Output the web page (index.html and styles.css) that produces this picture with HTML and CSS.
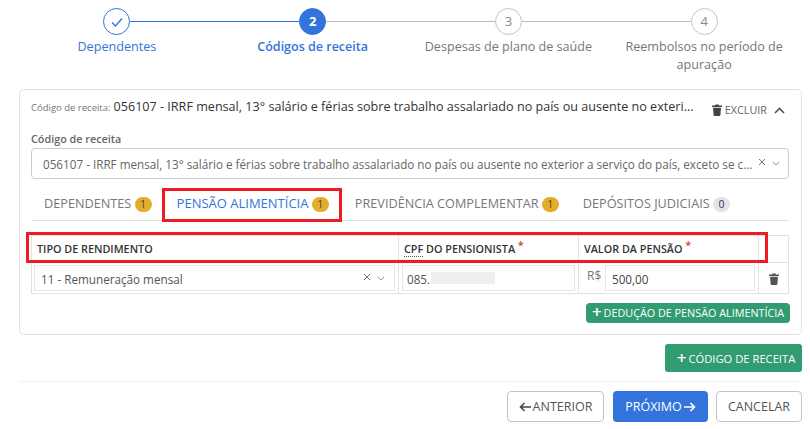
FILE: index.html
```html
<!DOCTYPE html>
<html>
<head>
    <title>Pensão alimentícia</title>
    <meta charset="utf-8">
    <link rel="stylesheet" href="styles.css">
</head>
<body>
    <div class="page">
        <div class="stepper">
            <div class="step done line-after-blue">
                <div class="circle">
                    <svg width="14" height="14" viewBox="0 0 14 14"><path d="M2 7.5 L5.5 11 L12 3.5" fill="none" stroke="#3373dc" stroke-width="1.3"/></svg>
                </div>
                <div class="step-label">Dependentes</div>
            </div>
            <div class="step active">
                <div class="circle">2</div>
                <div class="step-label">Códigos de receita</div>
            </div>
            <div class="step">
                <div class="circle">3</div>
                <div class="step-label">Despesas de plano de saúde</div>
            </div>
            <div class="step last">
                <div class="circle">4</div>
                <div class="step-label">Reembolsos no período de apuração</div>
            </div>
        </div>

        <div class="card">
            <div class="card-head">
                <span class="head-small">Código de receita:</span>
                <span class="head-value">056107 - IRRF mensal, 13° salário e férias sobre trabalho assalariado no país ou ausente no exteri...</span>
                <span class="head-actions">
                    <svg class="trash" width="10" height="12" viewBox="0 0 10 12"><path d="M0 1.5h3L3.5 .5h3L7 1.5h3V3H0zM1 3.7h8L8.4 11a1 1 0 0 1-1 1H2.6a1 1 0 0 1-1-1z" fill="#444"/></svg>
                    EXCLUIR
                    <svg class="chev-up" width="11" height="7" viewBox="0 0 11 7"><path d="M1 6 L5.5 1.5 L10 6" fill="none" stroke="#555" stroke-width="1.6"/></svg>
                </span>
            </div>

            <div class="field-label">Código de receita</div>
            <div class="select">
                <span class="select-text">056107 - IRRF mensal, 13° salário e férias sobre trabalho assalariado no país ou ausente no exterior a serviço do país, exceto se c...</span>
                <svg class="x-icon" width="8" height="8" viewBox="0 0 8 8"><path d="M1 1 L7 7 M7 1 L1 7" stroke="#777" fill="none"/></svg>
                <svg class="chev" width="8" height="5" viewBox="0 0 10 6"><path d="M1 1 L5 5 L9 1" stroke="#777" fill="none"/></svg>
            </div>

            <div class="tabs">
                <div class="tab">DEPENDENTES <span class="badge">1</span></div>
                <div class="tab tab-active">PENSÃO ALIMENTÍCIA <span class="badge">1</span></div>
                <div class="tab">PREVIDÊNCIA COMPLEMENTAR <span class="badge">1</span></div>
                <div class="tab tab-last">DEPÓSITOS JUDICIAIS <span class="badge badge-grey">0</span></div>
                <div class="red-box red-tab"></div>
            </div>

            <div class="table-wrap">
                <div class="red-box red-head"></div>
                <table>
                    <tr>
                        <th class="col1">TIPO DE RENDIMENTO</th>
                        <th class="col2"><span class="dotted">CPF</span> DO PENSIONISTA <span class="req">*</span></th>
                        <th class="col3">VALOR DA PENSÃO <span class="req">*</span></th>
                        <th class="col4"></th>
                    </tr>
                    <tr>
                        <td class="td-first">
                            <div class="cell-input cell-select">
                                <span class="select-text">11 - Remuneração mensal</span>
                                <svg class="x-icon" width="8" height="8" viewBox="0 0 8 8"><path d="M1 1 L7 7 M7 1 L1 7" stroke="#777" fill="none"/></svg>
                                <svg class="chev" width="8" height="5" viewBox="0 0 10 6"><path d="M1 1 L5 5 L9 1" stroke="#777" fill="none"/></svg>
                            </div>
                        </td>
                        <td>
                            <div class="cell-input cell-cpf">085.<span class="blur"></span></div>
                        </td>
                        <td>
                            <div class="money">
                                <span class="prefix">R$</span>
                                <div class="cell-input money-input">500,00</div>
                            </div>
                        </td>
                        <td class="del">
                            <svg width="10" height="12" viewBox="0 0 10 12"><path d="M0 1.5h3L3.5 .5h3L7 1.5h3V3H0zM1 3.7h8L8.4 11a1 1 0 0 1-1 1H2.6a1 1 0 0 1-1-1z" fill="#555"/></svg>
                        </td>
                    </tr>
                </table>
            </div>

            <div class="row-right">
                <button class="btn-green btn-small"><span class="plus">+</span>DEDUÇÃO DE PENSÃO ALIMENTÍCIA</button>
            </div>
        </div>

        <div class="row-right add-row">
            <button class="btn-green btn-add"><span class="plus">+</span>CÓDIGO DE RECEITA</button>
        </div>

        <div class="footer">
            <button class="btn btn-outline btn-prev"><svg class="arrow" width="12" height="10" viewBox="0 0 12 10"><path d="M12 5H1.5M5.5 1 L1.5 5 L5.5 9" fill="none" stroke="#444" stroke-width="1.6"/></svg>ANTERIOR</button>
            <button class="btn btn-primary">PRÓXIMO<svg class="arrow" width="12" height="10" viewBox="0 0 12 10"><path d="M0 5H10.5M6.5 1 L10.5 5 L6.5 9" fill="none" stroke="white" stroke-width="1.6"/></svg></button>
            <button class="btn btn-outline btn-cancel">CANCELAR</button>
        </div>
    </div>
</body>
</html>
```

FILE: styles.css
```css
* {
    box-sizing: border-box;
}

body {
    margin: 0;
    padding: 0;
    background-color: white;
    font-family: "Open Sans", sans-serif;
    color: #555;
    height: 429px;
    overflow: hidden;
}

.page {
    width: 783px;
    margin-left: 19px;
    padding-top: 8px;
}

/* stepper */
.stepper {
    display: flex;
    height: 81px;
}

.step {
    position: relative;
    width: 196px;
    text-align: center;
    font-size: 12.6px;
    line-height: 18px;
    color: #777;
}

.step::after {
    content: "";
    position: absolute;
    top: 13px;
    left: 111px;
    width: 169px;
    height: 1px;
    background-color: #bbb;
}

.step.last::after {
    display: none;
}

.circle {
    width: 27px;
    height: 27px;
    margin: 0 auto 3px;
    border: 1px solid #c4c4c4;
    border-radius: 50%;
    background-color: white;
    font-size: 13px;
    line-height: 25px;
    color: #888;
    display: flex;
    align-items: center;
    justify-content: center;
}

.step-label {
    padding: 0 10px;
}

.done .circle {
    border-color: #3373dc;
}

.done,
.active {
    color: #3373dc;
}

.done::after {
    background-color: #3373dc;
}

.active .circle {
    background-color: #3373dc;
    border-color: #3373dc;
    color: white;
    font-weight: 700;
}

.active .step-label {
    font-weight: 600;
    font-size: 12.5px;
}

/* card */
.card {
    height: 246px;
    padding: 0 11px;
    border: 1px solid #e2e2e2;
    border-radius: 5px;
}

.card-head {
    display: flex;
    align-items: baseline;
    height: 38px;
    padding-top: 7px;
    line-height: 20px;
    color: #333;
}

.head-small {
    font-size: 9.5px;
    color: #777;
    margin-right: 3px;
}

.head-value {
    font-size: 12.6px;
    white-space: nowrap;
}

.head-actions {
    margin-left: auto;
    font-size: 10.8px;
    color: #666;
    display: flex;
    align-items: center;
    align-self: flex-start;
    margin-right: 5px;
    margin-top: 3px;
}

.trash {
    margin-right: 3px;
}

.chev-up {
    margin-left: 7px;
}

.field-label {
    height: 20px;
    padding-top: 3px;
    font-size: 10.8px;
    line-height: 16px;
    font-weight: 600;
    color: #666;
}

.select {
    display: flex;
    align-items: center;
    height: 31px;
    width: 758px;
    padding: 0 8px 0 11px;
    border: 1px solid #ccc;
    border-radius: 4px;
    font-size: 11.7px;
    color: #666;
}

.select-text {
    flex: 1;
    white-space: nowrap;
    overflow: hidden;
}

.x-icon {
    margin-bottom: 3px;
}

.chev {
    margin-left: 6px;
}

/* tabs */
.tabs {
    position: relative;
    display: flex;
    height: 42px;
    width: 758px;
    border-bottom: 1px solid #e2e2e2;
}

.tab {
    padding: 15px 13px 0;
    font-size: 12.7px;
    line-height: 18px;
    color: #777;
    white-space: nowrap;
}

.tab-active {
    color: #3373dc;
    font-size: 13px;
    margin-left: -1px;
}

.tab-last {
    margin-left: -2px;
}

.badge {
    display: inline-block;
    width: 17px;
    height: 15px;
    border-radius: 8px;
    background-color: #e5ac2b;
    color: #444;
    font-size: 10.5px;
    line-height: 15px;
    text-align: center;
}

.badge-grey {
    background-color: #e4e4e4;
    color: #335;
}

.red-box {
    position: absolute;
    border: 3px solid #ed1c24;
    pointer-events: none;
}

.red-tab {
    left: 131px;
    top: 9px;
    width: 180px;
    height: 34px;
}

/* table */
.table-wrap {
    position: relative;
    margin-top: 14px;
    width: 758px;
}

.red-head {
    left: -5px;
    top: -3px;
    width: 742px;
    height: 31px;
    z-index: 1;
}

table {
    width: 758px;
    border-collapse: collapse;
    table-layout: fixed;
}

th,
td {
    border: 1px solid #e2e2e2;
    padding: 0;
}

th {
    height: 27px;
    padding: 0 0 1px 5px;
    text-align: left;
    font-size: 10.8px;
    font-weight: 600;
    color: #333;
}

td {
    height: 31px;
    padding: 2px 3px;
}

.td-first {
    padding-left: 2px;
}

.col1 {
    width: 367px;
}

.col2,
.col3 {
    width: 180px;
}

.dotted {
    border-bottom: 1px dotted #555;
}

.req {
    position: relative;
    top: -4px;
    color: #d23a3a;
    font-size: 11px;
    line-height: 10px;
}

.cell-input {
    height: 26px;
    padding-left: 6px;
    padding-top: 1px;
    border: 1px solid #e6e6e6;
    font-size: 11.7px;
    line-height: 24px;
    color: #555;
    display: flex;
}

.cell-cpf {
    padding-left: 4px;
}

.cell-select {
    align-items: center;
    padding-right: 9px;
}

.blur {
    display: inline-block;
    width: 64px;
    height: 12px;
    margin: 5px 0 0 1px;
    background-color: #eeeff1;
}

.money {
    display: flex;
    align-items: flex-start;
}

.prefix {
    width: 23px;
    padding-left: 5px;
    font-size: 12px;
    line-height: 22px;
    color: #777;
}

.money-input {
    flex: 1;
    color: #444;
}

.del {
    text-align: center;
    padding-top: 3px;
}

/* buttons */
.row-right {
    display: flex;
    justify-content: flex-end;
}

.card .row-right {
    width: 759px;
    margin-top: 9px;
}

button {
    font-family: "Open Sans", sans-serif;
    cursor: pointer;
}

.btn-green {
    border: none;
    background-color: #319b72;
    color: white;
    white-space: nowrap;
}

.plus {
    font-size: 17px;
    line-height: 10px;
    font-weight: 600;
    margin-right: 2px;
    vertical-align: -1px;
}

.btn-small {
    width: 204px;
    height: 20px;
    padding: 0;
    border-radius: 4px;
    font-size: 10.8px;
    line-height: 20px;
}

.add-row {
    margin-top: 9px;
}

.btn-add {
    width: 137px;
    height: 28px;
    padding: 0 0 0 5px;
    border-radius: 3px;
    font-size: 11.2px;
}

.footer {
    display: flex;
    justify-content: flex-end;
    gap: 9px;
    height: 42px;
    margin-top: 9px;
    padding-top: 9px;
    border-top: 1px solid #f0f0f0;
}

.btn {
    height: 31px;
    padding: 0;
    border-radius: 4px;
    font-size: 12.5px;
    white-space: nowrap;
}

.btn-outline {
    border: 1px solid #c4c4c4;
    background-color: white;
    color: #555;
}

.btn-prev {
    width: 97px;
}

.btn-prev .arrow {
    margin-right: 2px;
    vertical-align: -1px;
}

.btn-cancel {
    width: 86px;
    margin-left: -1px;
}

.btn-primary {
    width: 95px;
    border: none;
    background-color: #3373dc;
    color: white;
}

.btn-primary .arrow {
    margin-left: 2px;
    vertical-align: -1px;
}
```
